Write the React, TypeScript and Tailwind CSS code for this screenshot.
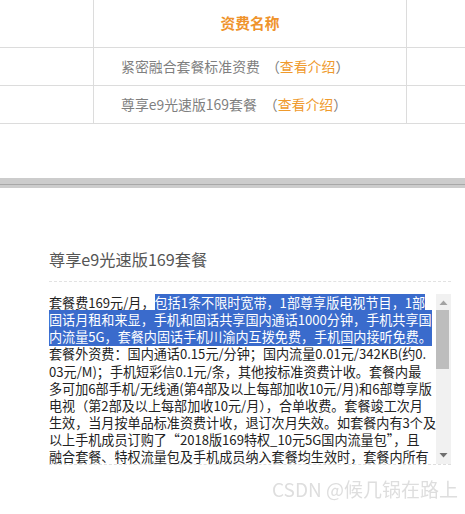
const sans = "font-['Noto_Sans_CJK_SC','Liberation_Sans',sans-serif]";

function Row({ name, gap }: { name: string; gap: string }) {
  return (
    <div className="flex h-[38px] border-b border-[#dcdcdc]">
      <div className="w-[94px] shrink-0 border-r border-[#dcdcdc]" />
      <div className="w-[313px] shrink-0 border-r border-[#dcdcdc] pl-[27px] flex items-center text-[13.9px] text-[#7f7f7f] whitespace-nowrap">
        <span>{name}</span>
        <span className={gap}>（</span>
        <span className="text-[#ef9a2c]">查看介绍</span>
        <span>）</span>
      </div>
    </div>
  );
}

const lines: string[] = [
  "套餐外资费：国内通话0.15元/分钟；国内流量0.01元/342KB(约0.",
  "03元/M)；手机短彩信0.1元/条，其他按标准资费计收。套餐内最",
  "多可加6部手机/无线通(第4部及以上每部加收10元/月)和6部尊享版",
  "电视（第2部及以上每部加收10元/月），合单收费。套餐竣工次月",
  "生效，当月按单品标准资费计收，退订次月失效。如套餐内有3个及",
  "以上手机成员订购了“2018版169特权_10元5G国内流量包”，且",
  "融合套餐、特权流量包及手机成员纳入套餐均生效时，套餐内所有",
];

export default function App() {
  return (
    <div className={`w-[465px] h-[514px] overflow-hidden bg-white relative ${sans}`}>
      <div className="h-[124px]">
        <div className="flex h-[48px] border-b border-[#dcdcdc]">
          <div className="w-[94px] shrink-0 border-r border-[#dcdcdc]" />
          <div className="w-[313px] shrink-0 border-r border-[#dcdcdc] flex items-center justify-center text-[14.7px] font-bold text-[#ef932c]">
            资费名称
          </div>
        </div>
        <Row name="紧密融合套餐标准资费" gap="ml-[6px]" />
        <Row name="尊享e9光速版169套餐" gap="ml-[7px]" />
      </div>

      <div className="mt-[54px] h-[10px] bg-[#cccccc] flex flex-col">
        <div className="h-[6px]" />
        <div className="h-px bg-[#a8a8a8]" />
      </div>

      <div className="pl-[49px] pr-[14px]">
        <div className="h-[94px] flex flex-col justify-end">
          <div className="text-[16.2px] leading-[22px] text-[#555555] pb-[11px] border-b border-dashed border-[#e2e2e2] whitespace-nowrap">
            尊享e9光速版169套餐
          </div>
        </div>
        <div className="mt-[12px] flex h-[171px] border-b border-dashed border-[#dedede]">
          <div className="w-[387px] shrink-0 overflow-hidden text-[13.1px] leading-[17.15px] text-[#222222] whitespace-nowrap">
            <div>
              套餐费169元/月，<span className="bg-[#3a6bcc] text-white">包括1条不限时宽带，1部尊享版电视节目，1部</span>
            </div>
            <div><span className="bg-[#3a6bcc] text-white">固话月租和来显，手机和固话共享国内通话1000分钟，手机共享国</span></div>
            <div><span className="bg-[#3a6bcc] text-white">内流量5G，套餐内固话手机川渝内互拨免费，手机国内接听免费。</span></div>
            {lines.map((l) => (
              <div key={l}>{l}</div>
            ))}
          </div>
          <div className="w-[15px] shrink-0 bg-[#f1f1f1] flex flex-col items-start">
            <svg width="15" height="17" viewBox="0 0 15 17" className="shrink-0">
              <path d="M3.5 11 L7.5 6.5 L11.5 11 Z" fill="#a3a3a3" />
            </svg>
            <div className="w-[13px] h-[59px] bg-[#bdbdbd] -mt-px" />
            <div className="flex-1" />
            <svg width="15" height="17" viewBox="0 0 15 17" className="shrink-0">
              <path d="M3.5 6 L7.5 10.5 L11.5 6 Z" fill="#6f6f6f" />
            </svg>
          </div>
        </div>
      </div>

      <div className="absolute right-[7px] bottom-[13px] text-[19px] leading-[24px] text-[#dedede] blur-[0.6px] whitespace-nowrap">
        CSDN @候几锅在路上
      </div>
    </div>
  );
}
